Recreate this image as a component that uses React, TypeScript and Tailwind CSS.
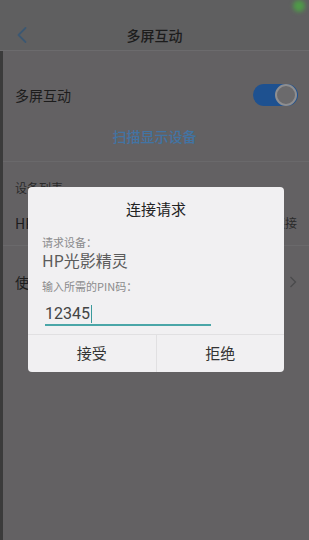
import React from "react";

const font = { fontFamily: '"Noto Sans CJK SC", "Noto Sans", sans-serif' };

function BackIcon() {
  return (
    <svg width="12" height="18" viewBox="0 0 12 18" fill="none">
      <path d="M9.5 2 L2.5 9 L9.5 16" stroke="#3c5872" strokeWidth="1.8" strokeLinecap="round" strokeLinejoin="round" />
    </svg>
  );
}

function Toggle() {
  return (
    <div className="relative h-[22px] w-[45px] rounded-full bg-[#1e5190]">
      <div className="absolute right-[1px] top-[0px] h-[22px] w-[22px] rounded-full border-2 border-[#8e8e90] bg-[#6b6a6c]" />
    </div>
  );
}

export default function App() {
  return (
    <div className="relative h-[540px] w-full overflow-hidden bg-[#636163] text-[#1c1c1c]" style={font}>
      <div className="absolute left-0 top-0 h-full w-[3px] bg-[#3b3b3b]" />

      {/* status bar */}
      <div className="relative h-[20px] bg-[#5f5f60]">
        <div className="absolute right-[4px] top-[0px] h-[12px] w-[12px] rounded-full bg-[#4f9a48] blur-[2px]" />
      </div>

      {/* header */}
      <div className="relative flex h-[31px] items-center justify-center border-b border-[#6c6b6d] bg-[#5f5f60]">
        <div className="absolute left-[16px] top-[6px]">
          <BackIcon />
        </div>
        <span className="text-[14px] font-medium">多屏互动</span>
      </div>

      {/* switch row */}
      <div className="mt-[22px] flex h-[44px] items-center justify-between pl-[15px] pr-[11px]">
        <span className="text-[14px]">多屏互动</span>
        <Toggle />
      </div>

      <div className="mt-[2px] flex h-[34px] items-center justify-center">
        <span className="text-[14px] font-medium text-[#4274a4]">扫描显示设备</span>
      </div>
      <div className="mt-[8px] h-px bg-[#6a696b]" />

      <div className="mt-[18px] pl-[15px] text-[12px] leading-[16px] text-[#2a2a2a]">设备列表</div>

      <div className="mt-[12px] flex h-[30px] items-center justify-between pl-[15px] pr-[12px]">
        <span className="text-[14px]">HP光影精灵</span>
        <span className="text-[12px] text-[#2a2a2a]">连接</span>
      </div>
      <div className="mt-[7px] h-px bg-[#6a696b]" />

      <div className="mt-[16px] flex h-[40px] items-center justify-between pl-[15px] pr-[12px]">
        <span className="text-[14px]">使用帮助</span>
        <svg width="8" height="12" viewBox="0 0 8 12" fill="none">
          <path d="M1.5 1 L6.5 6 L1.5 11" stroke="#4a4a4c" strokeWidth="1.3" />
        </svg>
      </div>

      {/* dialog */}
      <div className="absolute left-[28px] top-[187px] w-[256px] overflow-hidden rounded-[4px] bg-[#f1f0f2]">
        <div className="flex h-[44px] items-center justify-center text-[15px] text-[#222]">连接请求</div>
        <div className="px-[14px]">
          <div className="mt-[4px] text-[11px] leading-[14px] text-[#8b8b8d]">请求设备：</div>
          <div className="mt-[1px] text-[16px] leading-[20px] text-[#5b5b5b]">HP光影精灵</div>
          <div className="mt-[9px] text-[11px] leading-[14px] text-[#8b8b8d]">输入所需的PIN码：</div>
          <div className="ml-[3px] mt-[7px] flex h-[26px] w-[166px] items-center border-b-2 border-[#4aa6a8] pt-[3px]">
            <span className="text-[16px] leading-[20px] text-[#444]" style={{ fontFamily: "Roboto, sans-serif" }}>
              12345
            </span>
            <span className="ml-[1px] h-[18px] w-[1.5px] bg-[#3a9a9c]" />
          </div>
        </div>
        <div className="mt-[8px] flex h-[38px] border-t border-[#e1e0e2]">
          <div className="flex flex-1 items-center justify-center text-[15px] text-[#333]">接受</div>
          <div className="w-px bg-[#e1e0e2]" />
          <div className="flex flex-1 items-center justify-center text-[15px] text-[#333]">拒绝</div>
        </div>
      </div>
    </div>
  );
}
